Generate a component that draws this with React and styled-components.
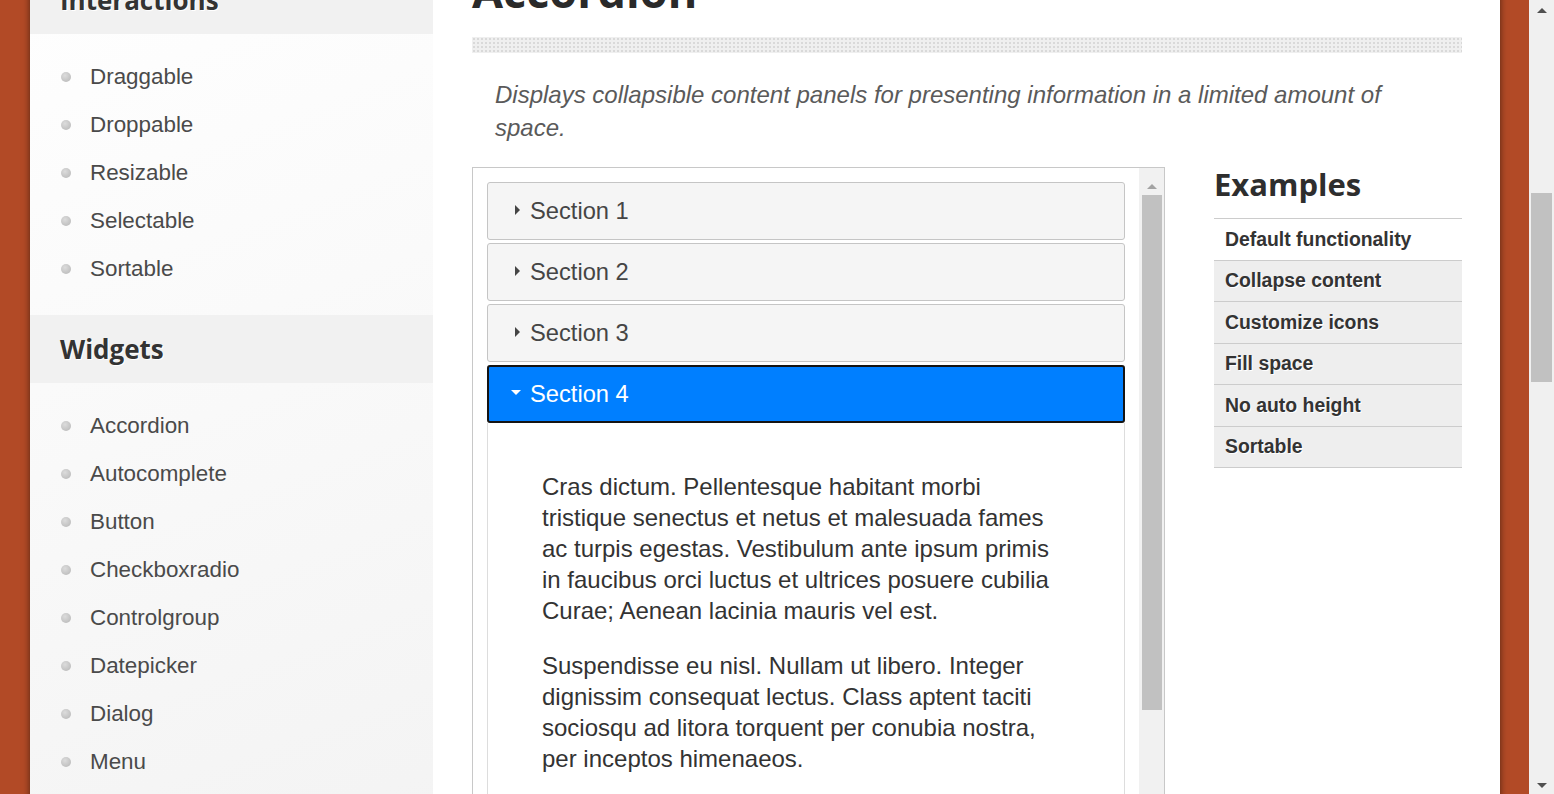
import React from 'react';
import styled, { createGlobalStyle } from 'styled-components';

const GlobalStyle = createGlobalStyle`
    html, body {
        margin: 0;
        padding: 0;
        height: 100%;
        overflow: hidden;
        background: #b24a26;
        font-family: "Liberation Sans", Arial, sans-serif;
    }
`;

const Viewport = styled.div`
    display: flex;
    height: 794px;
    overflow: hidden;
    background: #b24a26;
`;

const Site = styled.div`
    flex: 1;
    padding: 0 29px 0 30px;
    min-width: 0;
`;

const Container = styled.div`
    display: flex;
    margin-top: -80px;
    min-height: 1200px;
    background: #fff;
    box-shadow: 0 0 7px rgba(0, 0, 0, 0.55);
`;

const Sidebar = styled.aside`
    width: 403px;
    flex-shrink: 0;
    padding-top: 46px;
    background: linear-gradient(160deg, #ffffff 0%, #fafafa 35%, #f0f0f0 100%);
`;

const SideHeading = styled.h3`
    margin: 0;
    height: 68px;
    padding-left: 30px;
    display: flex;
    align-items: center;
    background: #f1f1f1;
    font-family: "Open Sans", sans-serif;
    font-weight: 700;
    font-size: 26px;
    color: #333;
    text-shadow: 1px 1px 0 #fff;
`;

const SideList = styled.ul`
    list-style: none;
    margin: 0;
    padding: 19px 0 22px 31px;
`;

const SideItem = styled.li`
    display: flex;
    align-items: center;
    height: 48px;
    font-size: 22.4px;
    color: #4a4a4a;

    &::before {
        content: '';
        width: 10px;
        height: 10px;
        border-radius: 50%;
        margin-right: 19px;
        background: radial-gradient(circle at 40% 35%, #dcdcdc, #b5b5b5);
    }
`;

const Main = styled.main`
    flex: 1;
    padding: 43px 38px 0 39px;
`;

const Title = styled.h1`
    margin: 0 0 18px;
    line-height: 56px;
    font-family: "Open Sans", sans-serif;
    font-weight: 700;
    font-size: 45px;
    color: #2a2a2a;
`;

const DotBar = styled.div`
    height: 16px;
    background-color: #efefef;
    background-image: radial-gradient(#d9d9d9 1px, transparent 1.3px);
    background-size: 4px 4px;
`;

const Description = styled.p`
    margin: 25px 0 23px;
    padding: 0 23px;
    font-size: 24px;
    line-height: 33px;
    font-style: italic;
    color: #5a5a5a;
`;

const Columns = styled.div`
    display: flex;
    align-items: flex-start;
    gap: 49px;
`;

const DemoFrame = styled.div`
    display: flex;
    width: 691px;
    height: 720px;
    border: 1px solid #c8c8c8;
`;

const DemoBody = styled.div`
    flex: 1;
    padding: 14px 14px 0 14px;
`;

const AccordionHeader = styled.h3`
    display: flex;
    align-items: center;
    height: 58px;
    box-sizing: border-box;
    margin: ${p => (p.$first ? '0' : '3px')} 0 0;
    padding-left: ${p => (p.$active ? '21px' : '23px')};
    border: ${p => (p.$active ? '2px solid #141414' : '1px solid #c5c5c5')};
    border-radius: 3px;
    background: ${p => (p.$active ? '#007fff' : '#f5f5f5')};
    color: ${p => (p.$active ? '#fff' : '#454545')};
    font-weight: 400;
    font-size: 23.7px;
`;

const Caret = styled.svg`
    width: 12px;
    height: 12px;
    margin-right: ${p => (p.$open ? '8px' : '7px')};
    fill: currentColor;
    margin-top: -3px;
`;

const AccordionPanel = styled.div`
    border: 1px solid #dddddd;
    border-top: 0;
    padding: 24px 0 0 54px;
    color: #333;
    font-size: 24px;
    line-height: 31px;

    p {
        width: 520px;
        margin: 24px 0;
    }
`;

const FrameScroll = styled.div`
    width: 25px;
    display: flex;
    flex-direction: column;
    align-items: center;
    background: #f1f1f1;
    padding-top: 8px;
`;

const ScrollArrow = styled.div`
    width: 0;
    height: 0;
    margin: 8px 0 6px;
    border-left: 5px solid transparent;
    border-right: 5px solid transparent;
    border-bottom: ${p => (p.$up ? `5px solid ${p.$color}` : '0')};
    border-top: ${p => (p.$up ? '0' : `5px solid ${p.$color}`)};
`;

const ScrollThumb = styled.div`
    width: ${p => p.$w}px;
    height: ${p => p.$h}px;
    background: #c1c1c1;
`;

const ScrollSpacer = styled.div`
    flex: 1;
`;

const Examples = styled.div`
    flex: 1;
`;

const ExamplesTitle = styled.h2`
    margin: 0 0 17px;
    line-height: 34px;
    font-family: "Open Sans", sans-serif;
    font-weight: 700;
    font-size: 31px;
    color: #2e2e2e;
    text-shadow: 1px 1px 0 #fff;
`;

const ExampleList = styled.ul`
    list-style: none;
    margin: 0;
    padding: 0;
    border-top: 1px solid #cccccc;
`;

const ExampleItem = styled.li`
    height: 40.5px;
    display: flex;
    align-items: center;
    padding-left: 11px;
    border-bottom: 1px solid #cccccc;
    background: ${p => (p.$current ? '#fff' : '#eeeeee')};
    font-weight: 700;
    font-size: 19.4px;
    color: #333;
    text-shadow: 1px 1px 0 #fff;
`;

const PageScroll = styled.div`
    width: 25px;
    flex-shrink: 0;
    display: flex;
    flex-direction: column;
    align-items: center;
    background: #f0f0f0;
`;

const ThumbOffset = styled.div`
    flex: 0 0 174px;
`;

const interactions = ['Draggable', 'Droppable', 'Resizable', 'Selectable', 'Sortable'];
const widgets = ['Accordion', 'Autocomplete', 'Button', 'Checkboxradio', 'Controlgroup', 'Datepicker', 'Dialog', 'Menu', 'Progressbar'];
const examples = ['Default functionality', 'Collapse content', 'Customize icons', 'Fill space', 'No auto height', 'Sortable'];

const Header = ({ label, active, first }) => (
    <AccordionHeader $active={active} $first={first}>
        <Caret $open={active} viewBox="0 0 12 12">
            {active ? <polygon points="1,3 11,3 6,8" /> : <polygon points="4,1 9,6 4,11" />}
        </Caret>
        {label}
    </AccordionHeader>
);

export default function App() {
    return (
        <>
            <GlobalStyle />
            <Viewport>
                <Site>
                    <Container>
                        <Sidebar>
                            <SideHeading>Interactions</SideHeading>
                            <SideList>
                                {interactions.map(i => <SideItem key={i}>{i}</SideItem>)}
                            </SideList>
                            <SideHeading>Widgets</SideHeading>
                            <SideList>
                                {widgets.map(i => <SideItem key={i}>{i}</SideItem>)}
                            </SideList>
                        </Sidebar>
                        <Main>
                            <Title>Accordion</Title>
                            <DotBar />
                            <Description>
                                Displays collapsible content panels for presenting information in a limited amount of space.
                            </Description>
                            <Columns>
                                <DemoFrame>
                                    <DemoBody>
                                        <Header label="Section 1" first />
                                        <Header label="Section 2" />
                                        <Header label="Section 3" />
                                        <Header label="Section 4" active />
                                        <AccordionPanel>
                                            <p>
                                                Cras dictum. Pellentesque habitant morbi tristique senectus et netus et malesuada fames ac turpis egestas. Vestibulum ante ipsum primis in faucibus orci luctus et ultrices posuere cubilia Curae; Aenean lacinia mauris vel est.
                                            </p>
                                            <p>
                                                Suspendisse eu nisl. Nullam ut libero. Integer dignissim consequat lectus. Class aptent taciti sociosqu ad litora torquent per conubia nostra, per inceptos himenaeos.
                                            </p>
                                        </AccordionPanel>
                                    </DemoBody>
                                    <FrameScroll>
                                        <ScrollArrow $up $color="#a3a3a3" />
                                        <ScrollThumb $w={20} $h={515} />
                                        <ScrollSpacer />
                                    </FrameScroll>
                                </DemoFrame>
                                <Examples>
                                    <ExamplesTitle>Examples</ExamplesTitle>
                                    <ExampleList>
                                        {examples.map((e, i) => (
                                            <ExampleItem key={e} $current={i === 0}>{e}</ExampleItem>
                                        ))}
                                    </ExampleList>
                                </Examples>
                            </Columns>
                        </Main>
                    </Container>
                </Site>
                <PageScroll>
                    <ScrollArrow $up $color="#505050" />
                    <ThumbOffset />
                    <ScrollThumb $w={21} $h={189} />
                    <ScrollSpacer />
                    <ScrollArrow $color="#505050" />
                </PageScroll>
            </Viewport>
        </>
    );
}
